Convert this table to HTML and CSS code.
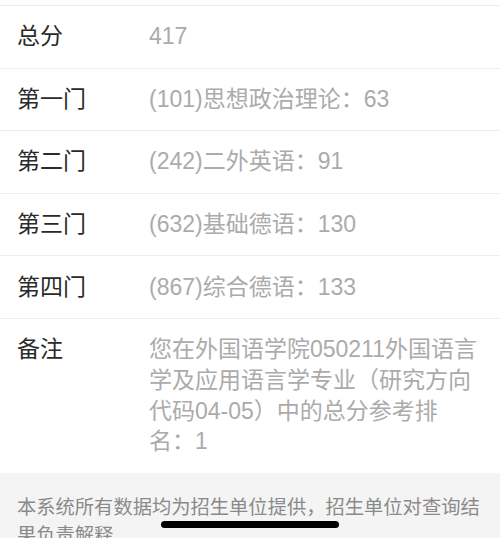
FILE: index.html
```html
<html>
	<head>
		<meta charset="utf-8" />
		<title>成绩查询</title>
		<link rel="stylesheet" href="styles.css">
	</head>
	<body>
		<div class="score-list">
			<div class="row">
				<div class="label">总分</div>
				<div class="value">417</div>
			</div>
			<div class="row">
				<div class="label">第一门</div>
				<div class="value">(101)思想政治理论：63</div>
			</div>
			<div class="row">
				<div class="label">第二门</div>
				<div class="value">(242)二外英语：91</div>
			</div>
			<div class="row">
				<div class="label">第三门</div>
				<div class="value">(632)基础德语：130</div>
			</div>
			<div class="row">
				<div class="label">第四门</div>
				<div class="value">(867)综合德语：133</div>
			</div>
			<div class="row row-last">
				<div class="label">备注</div>
				<div class="value">您在外国语学院050211外国语言学及应用语言学专业（研究方向代码04-05）中的总分参考排<span class="keep">名：1</span></div>
			</div>
		</div>
		<div class="notice">
			<p>本系统所有数据均为招生单位提供，招生单位对查询结果负责解释</p>
		</div>
		<div class="home-bar"></div>
	</body>
</html>
```

FILE: styles.css
```css
html, body { margin: 0; padding: 0; background-color: #ffffff; }
body { font-family: "Liberation Sans", "Noto Sans CJK SC", sans-serif; height: 538px; overflow: hidden; position: relative; }

.score-list { padding-top: 5px; }
.row {
	display: flex;
	align-items: flex-start;
	padding: 15.3px 14px 15.3px 17px;
	border-top: 1px solid #ececec;
	font-size: 23px;
	line-height: 31px;
}
.row-last { line-height: 30.7px; padding-bottom: 16px; }
.label { width: 132px; flex-shrink: 0; color: #2a2a2a; }
.value { flex: 1; color: #ababab; }
.keep { white-space: nowrap; }

.notice {
	background-color: #f4f4f4;
	padding: 21px 6px 20px 17px;
	font-size: 19.3px;
	line-height: 28px;
	color: #8a8a8a;
}
.notice p { margin: 0; }

.home-bar {
	position: absolute;
	left: 161px;
	top: 521px;
	width: 178px;
	height: 7px;
	border-radius: 4px;
	background-color: #000000;
}
```
